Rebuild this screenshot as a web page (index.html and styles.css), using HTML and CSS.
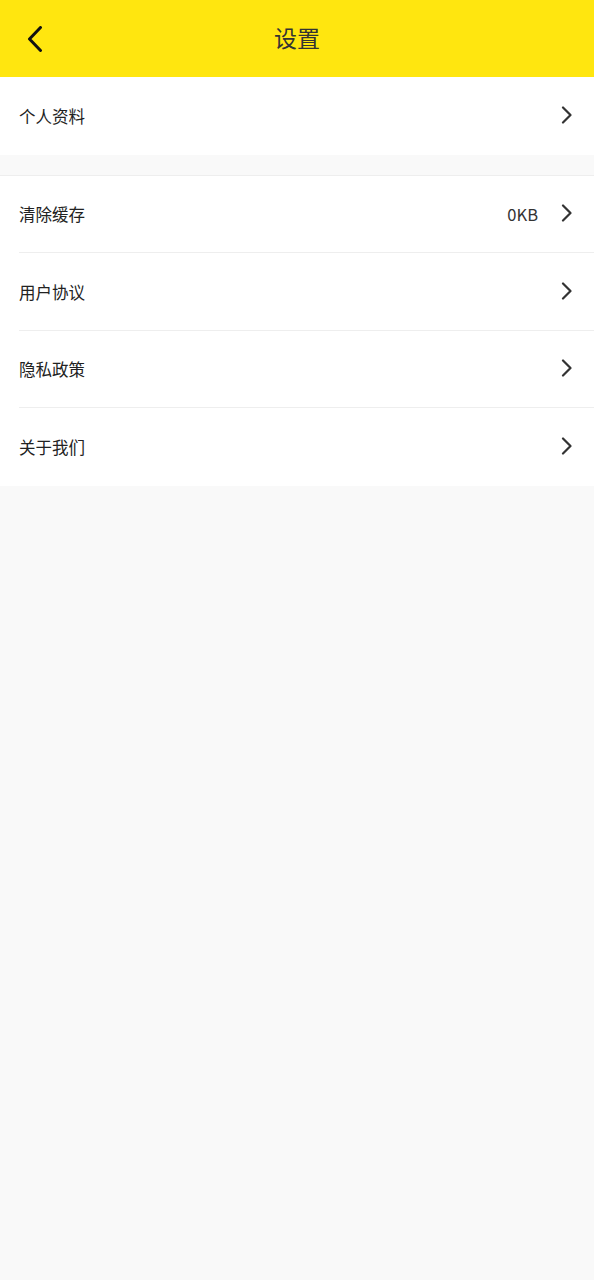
FILE: index.html
```html
<!DOCTYPE html>
<html lang="zh-CN">
<head>
<meta charset="utf-8">
<title>设置</title>
<link rel="stylesheet" href="styles.css">
</head>
<body>
<header class="topbar">
  <div class="back">
    <svg width="16" height="26" viewBox="0 0 16 26"><path d="M13.5 1.5 L2.5 13 L13.5 24.5" fill="none" stroke="#111" stroke-width="3" stroke-linecap="round" stroke-linejoin="round"/></svg>
  </div>
  <h1 class="title">设置</h1>
  <div class="spacer"></div>
</header>
<section class="group first">
  <div class="row"><span class="label">个人资料</span><span class="right"><svg class="chev" width="12" height="18" viewBox="0 0 12 18"><path d="M2 1.5 L9.5 9 L2 16.5" fill="none" stroke="#333" stroke-width="2.2" stroke-linecap="round" stroke-linejoin="round"/></svg></span></div>
</section>
<section class="group second">
  <div class="row"><span class="label">清除缓存</span><span class="right"><span class="value">0KB</span><svg class="chev" width="12" height="18" viewBox="0 0 12 18"><path d="M2 1.5 L9.5 9 L2 16.5" fill="none" stroke="#333" stroke-width="2.2" stroke-linecap="round" stroke-linejoin="round"/></svg></span></div>
  <div class="row"><span class="label">用户协议</span><span class="right"><svg class="chev" width="12" height="18" viewBox="0 0 12 18"><path d="M2 1.5 L9.5 9 L2 16.5" fill="none" stroke="#333" stroke-width="2.2" stroke-linecap="round" stroke-linejoin="round"/></svg></span></div>
  <div class="row"><span class="label">隐私政策</span><span class="right"><svg class="chev" width="12" height="18" viewBox="0 0 12 18"><path d="M2 1.5 L9.5 9 L2 16.5" fill="none" stroke="#333" stroke-width="2.2" stroke-linecap="round" stroke-linejoin="round"/></svg></span></div>
  <div class="row"><span class="label">关于我们</span><span class="right"><svg class="chev" width="12" height="18" viewBox="0 0 12 18"><path d="M2 1.5 L9.5 9 L2 16.5" fill="none" stroke="#333" stroke-width="2.2" stroke-linecap="round" stroke-linejoin="round"/></svg></span></div>
</section>
</body>
</html>
```
FILE: styles.css
```css
html, body {
  margin: 0;
  padding: 0;
  background: #f9f9f9;
  font-family: "Noto Sans CJK SC", "Noto Sans", sans-serif;
  min-height: 1280px;
}
.topbar {
  height: 77px;
  background: #ffe60f;
  display: flex;
  align-items: center;
  padding: 0 0 0 27px;
}
.back {
  width: 16px;
  height: 26px;
  display: flex;
}
.title {
  flex: 1;
  margin: 0 43px 0 0;
  text-align: center;
  font-size: 23px;
  font-weight: 400;
  color: #333;
  line-height: 1;
  padding-bottom: 2px;
}
.spacer { width: 0; }
.group {
  background: #fff;
}
.group.second {
  margin-top: 20px;
  border-top: 1px solid #eee;
}
.row {
  height: 77px;
  margin-left: 19px;
  padding-right: 21px;
  display: flex;
  align-items: center;
  justify-content: space-between;
  border-bottom: 1px solid #eee;
  box-sizing: border-box;
}
.group.second .row:nth-child(even) {
  height: 78px;
}
.group.first .row {
  height: 78px;
  border-bottom: none;
}
.group.second .row:last-child {
  border-bottom: none;
}
.label {
  font-size: 16.5px;
  color: #222;
}
.right {
  display: flex;
  align-items: center;
  gap: 23px;
}
.value {
  font-size: 16.5px;
  color: #333;
}
.chev {
  display: block;
  margin-top: -2px;
}
```
